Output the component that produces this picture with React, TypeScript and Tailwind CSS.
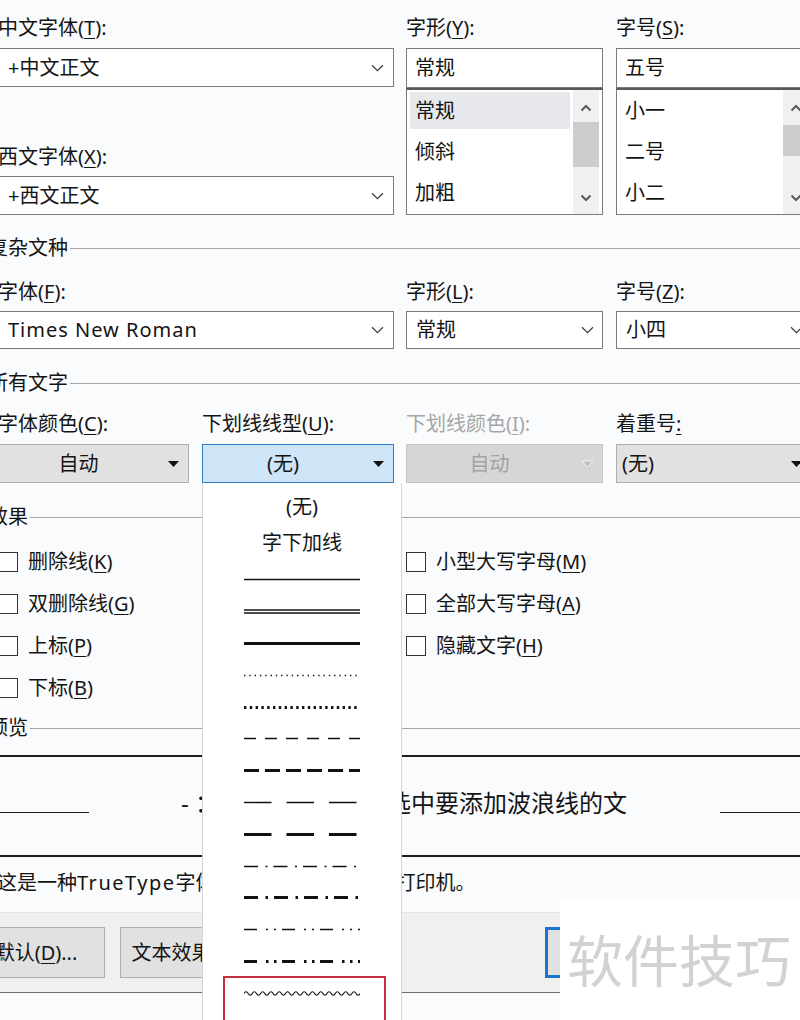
import React from 'react';

const K = ({ children }: { children: React.ReactNode }) => (
  <span className="underline underline-offset-[3px] decoration-1">{children}</span>
);

const Chevron = () => (
  <svg width="13" height="8" viewBox="0 0 13 8" fill="none">
    <path d="M1 1.2L6.5 6.6L12 1.2" stroke="#3a3a3a" strokeWidth="1.2" />
  </svg>
);

const Tri = ({ color = '#111', stroke }: { color?: string; stroke?: string }) => (
  <svg width="13" height="8" viewBox="0 0 13 8">
    <path d="M1 1H12L6.5 7Z" fill={color} stroke={stroke ?? 'none'} strokeWidth="1" />
  </svg>
);

const ScrollUp = () => (
  <svg width="12" height="8" viewBox="0 0 12 8" fill="none">
    <path d="M1.5 6.5L6 2L10.5 6.5" stroke="#5a5a5a" strokeWidth="2" />
  </svg>
);

const ScrollDown = () => (
  <svg width="12" height="8" viewBox="0 0 12 8" fill="none">
    <path d="M1.5 1.5L6 6L10.5 1.5" stroke="#5a5a5a" strokeWidth="2" />
  </svg>
);

const Section = ({ title }: { title: string }) => (
  <div className="flex items-center h-[28px]">
    <span className="text-[20px] leading-[28px] whitespace-nowrap">{title}</span>
    <div className="flex-1 h-px bg-[#a6a6a6] ml-[2px]" />
  </div>
);

const Combo = ({ value, chevW, latin }: { value: string; chevW: string; latin?: boolean }) => (
  <div className="h-full flex items-center bg-white border border-[#7a7a7a]">
    <div className={`flex-1 pl-[9px] text-[20px] whitespace-nowrap ${latin ? 'tracking-[1px]' : ''}`}>{value}</div>
    <div className={`${chevW} flex justify-center`}>
      <Chevron />
    </div>
  </div>
);

const ListBox = ({ items, selected, thumb }: { items: string[]; selected?: number; thumb: string }) => (
  <div className="flex h-[127px] bg-white border-x border-b border-[#7a7a7a] border-t-2 border-t-[#585858]">
    <div className="flex-1 flex flex-col gap-[4px] px-[3px] pt-[2px]">
      {items.map((it, i) => (
        <div
          key={it}
          className={`h-[37px] flex items-center pl-[5px] text-[20px] ${i === selected ? 'bg-[#e6e8ec]' : ''}`}
        >
          {it}
        </div>
      ))}
    </div>
    <div className="w-[26px] mr-[3px] flex flex-col bg-[#f0f0f0]">
      <div className="h-[32px] flex items-center justify-center pt-[4px]">
        <ScrollUp />
      </div>
      <div className="flex-1 flex flex-col">
        <div className={thumb} />
      </div>
      <div className="h-[32px] flex items-center justify-center">
        <ScrollDown />
      </div>
    </div>
  </div>
);

const Check = ({ label }: { label: React.ReactNode }) => (
  <div className="flex items-center">
    <div className="w-[20px] h-[20px] border border-[#333] bg-white" />
    <span className="ml-[10px] text-[20px] whitespace-nowrap">{label}</span>
  </div>
);

type LineStyle = { w?: number; dash?: string; double?: boolean; wave?: boolean };

const lineStyles: LineStyle[] = [
  { w: 1.4 },
  { double: true },
  { w: 3 },
  { w: 1.4, dash: '1.4 3.9' },
  { w: 3, dash: '2.4 3.4' },
  { w: 1.6, dash: '12 9' },
  { w: 3, dash: '15 6' },
  { w: 1.4, dash: '27.5 15' },
  { w: 3, dash: '27.5 15' },
  { w: 1.4, dash: '14 7.5 2 6' },
  { w: 3, dash: '14 7.5 2.5 6' },
  { w: 1.4, dash: '13 9 2 6 2 6' },
  { w: 3, dash: '13 9 2.5 5.5 2.5 5.5' },
  { wave: true },
];

const wavePath = () => {
  let d = 'M0 4.5';
  const p = 8.3;
  for (let x = 0; x < 115; x += p) {
    d += ` Q${(x + p / 4).toFixed(2)} 1 ${(x + p / 2).toFixed(2)} 4.5 Q${(x + (3 * p) / 4).toFixed(2)} 8 ${(x + p).toFixed(2)} 4.5`;
  }
  return d;
};

const LineSample = ({ s }: { s: LineStyle }) => (
  <svg width="116" height="9" viewBox="0 0 116 9" fill="none">
    {s.double ? (
      <>
        <line x1="0" y1="3" x2="116" y2="3" stroke="#111" strokeWidth="1.3" />
        <line x1="0" y1="6" x2="116" y2="6" stroke="#111" strokeWidth="1.3" />
      </>
    ) : s.wave ? (
      <path d={wavePath()} stroke="#111" strokeWidth="1.2" />
    ) : (
      <line x1="0" y1="4.5" x2="116" y2="4.5" stroke="#111" strokeWidth={s.w} strokeDasharray={s.dash} />
    )}
  </svg>
);

export default function App() {
  return (
    <div className="relative w-[800px] h-[1020px] overflow-hidden bg-[#fafbfc] text-[#141414] font-['Noto_Sans','Noto_Sans_CJK_SC',sans-serif]">
      <div className="ml-[-12px] w-[830px] pt-[14px]">
        {/* 中文 / 西文 */}
        <div className="flex pl-[10px]">
          <div className="w-[396px]">
            <div className="h-[28px] leading-[28px] text-[20px] whitespace-nowrap">
              中文字体(<K>T</K>):
            </div>
            <div className="mt-[6px] h-[39px]">
              <Combo value="+中文正文" chevW="w-[32px]" />
            </div>
            <div className="mt-[56px] h-[28px] leading-[28px] text-[20px] whitespace-nowrap">
              西文字体(<K>X</K>):
            </div>
            <div className="mt-[5px] h-[39px]">
              <Combo value="+西文正文" chevW="w-[32px]" />
            </div>
          </div>
          <div className="ml-[12px] w-[197px]">
            <div className="h-[28px] leading-[28px] text-[20px] whitespace-nowrap">
              字形(<K>Y</K>):
            </div>
            <div className="mt-[6px] h-[40px] flex items-center pl-[8px] bg-white border border-[#7a7a7a] text-[20px]">
              常规
            </div>
            <ListBox items={['常规', '倾斜', '加粗']} selected={0} thumb="h-[45px] bg-[#cdcdcd]" />
          </div>
          <div className="ml-[13px] w-[197px]">
            <div className="h-[28px] leading-[28px] text-[20px] whitespace-nowrap">
              字号(<K>S</K>):
            </div>
            <div className="mt-[6px] h-[40px] flex items-center pl-[8px] bg-white border border-[#7a7a7a] text-[20px]">
              五号
            </div>
            <ListBox items={['小一', '二号', '小二']} thumb="mt-[3px] h-[31px] bg-[#cdcdcd]" />
          </div>
        </div>

        {/* 复杂文种 */}
        <div className="mt-[19px]">
          <Section title="复杂文种" />
        </div>
        <div className="mt-[16px] flex pl-[10px] h-[28px] leading-[28px] text-[20px] whitespace-nowrap">
          <div className="w-[396px]">
            字体(<K>F</K>):
          </div>
          <div className="ml-[12px] w-[197px]">
            字形(<K>L</K>):
          </div>
          <div className="ml-[13px] w-[197px]">
            字号(<K>Z</K>):
          </div>
        </div>
        <div className="mt-[5px] flex pl-[10px] h-[38px]">
          <div className="w-[396px]">
            <Combo value="Times New Roman" chevW="w-[32px]" latin />
          </div>
          <div className="ml-[12px] w-[197px]">
            <Combo value="常规" chevW="w-[30px]" />
          </div>
          <div className="ml-[13px] w-[197px]">
            <Combo value="小四" chevW="w-[32px]" />
          </div>
        </div>

        {/* 所有文字 */}
        <div className="mt-[20px]">
          <Section title="所有文字" />
        </div>
        <div className="mt-[13px] flex pl-[10px] h-[28px] leading-[28px] text-[20px] whitespace-nowrap">
          <div className="w-[191px]">
            字体颜色(<K>C</K>):
          </div>
          <div className="ml-[13px] w-[192px]">
            下划线线型(<K>U</K>):
          </div>
          <div className="ml-[12px] w-[197px] text-[#a6a6a6]">
            下划线颜色(<K>I</K>):
          </div>
          <div className="ml-[13px] w-[197px]">
            着重号<K>:</K>
          </div>
        </div>
        <div className="mt-[6px] flex pl-[10px] h-[39px] text-[20px]">
          <div className="w-[191px] flex items-center bg-[#e1e1e1] border border-[#adadad]">
            <div className="flex-1 text-center">自动</div>
            <div className="w-[30px] flex justify-center">
              <Tri />
            </div>
          </div>
          <div className="ml-[13px] w-[192px] flex items-center bg-[#cde5f7] border border-[#2f7fc4]">
            <div className="flex-1 text-center">(无)</div>
            <div className="w-[30px] flex justify-center">
              <Tri />
            </div>
          </div>
          <div className="ml-[12px] w-[197px] flex items-center bg-[#d6d6d6] border border-[#c4c4c4] text-[#a3a3a3]">
            <div className="flex-1 text-center">自动</div>
            <div className="w-[30px] flex justify-center">
              <Tri color="#bcbcbc" stroke="#f4f4f4" />
            </div>
          </div>
          <div className="ml-[13px] w-[197px] flex items-center bg-[#e1e1e1] border border-[#adadad]">
            <div className="flex-1 pl-[5px]">(无)</div>
            <div className="w-[32px] flex justify-center">
              <Tri />
            </div>
          </div>
        </div>

        {/* 效果 */}
        <div className="mt-[20px]">
          <Section title="效果" />
        </div>
        <div className="mt-[10px] flex flex-col pl-[10px]">
          <div className="h-[42px] flex items-center">
            <div className="w-[408px]">
              <Check label={<>删除线(<K>K</K>)</>} />
            </div>
            <Check label={<>小型大写字母(<K>M</K>)</>} />
          </div>
          <div className="h-[42px] flex items-center">
            <div className="w-[408px]">
              <Check label={<>双删除线(<K>G</K>)</>} />
            </div>
            <Check label={<>全部大写字母(<K>A</K>)</>} />
          </div>
          <div className="h-[42px] flex items-center">
            <div className="w-[408px]">
              <Check label={<>上标(<K>P</K>)</>} />
            </div>
            <Check label={<>隐藏文字(<K>H</K>)</>} />
          </div>
          <div className="h-[42px] flex items-center">
            <Check label={<>下标(<K>B</K>)</>} />
          </div>
        </div>

        {/* 预览 */}
        <div className="mt-[5px]">
          <Section title="预览" />
        </div>
        <div className="mt-[13px] h-[102px] border-y-2 border-[#1e1e1e] flex items-center">
          <div className="w-[101px] h-px mt-[12px] bg-[#1e1e1e]" />
          <div className="ml-[92px] mb-[6px] text-[24px] whitespace-nowrap">- ：先在文档正文中选中要添加波浪线的文</div>
          <div className="ml-auto w-[98px] h-px mt-[12px] bg-[#1e1e1e]" />
        </div>
        <div className="mt-[12px] h-[28px] leading-[28px] pl-[9px] text-[20px] whitespace-nowrap">
          这是一种<span className="tracking-[1.5px]">TrueType</span>字体，同时适用于屏幕和打印机。
        </div>

        {/* buttons band */}
        <div className="mt-[15px] h-[81px] bg-[#f0f0f0] border-t border-t-[#e4e4e4] border-b border-b-[#6e6e6e] flex items-start pt-[14px] text-[20px]">
          <div className="ml-[-61px] w-[178px] h-[51px] flex items-center justify-center bg-[#e1e1e1] border border-[#adadad] whitespace-nowrap">
            设为默认(<K>D</K>)...
          </div>
          <div className="ml-[15px] w-[142px] h-[51px] flex items-center justify-center bg-[#e1e1e1] border border-[#adadad] whitespace-nowrap">
            文本效果(<K>E</K>)...
          </div>
          <div className="ml-[283px] w-[110px] h-[51px] bg-[#e1e1e1] border-[3px] border-[#1c74cc]" />
        </div>
      </div>

      {/* open dropdown of 下划线线型 */}
      <div className="absolute left-[202px] top-[483px] w-[200px] h-[540px] z-10 bg-white border-x border-[#d6d6d6] flex flex-col items-center pt-[6px] text-[20px]">
        <div className="h-[36px] leading-[36px]">(无)</div>
        <div className="h-[36px] leading-[36px]">字下加线</div>
        <div className="mt-[3px] flex flex-col">
          {lineStyles.map((s, i) => (
            <div key={i} className="h-[31.8px] flex items-center">
              <LineSample s={s} />
            </div>
          ))}
        </div>
        <div className="absolute left-[20px] top-[493px] w-[163px] h-[60px] border-2 border-[#c3303c]" />
      </div>

      {/* watermark */}
      <div className="absolute left-[560px] top-[900px] w-[240px] h-[120px] z-10 bg-white flex items-center pl-[7px]">
        <span className="text-[56px] leading-none text-[#d2d2d2] whitespace-nowrap">软件技巧</span>
      </div>
    </div>
  );
}
